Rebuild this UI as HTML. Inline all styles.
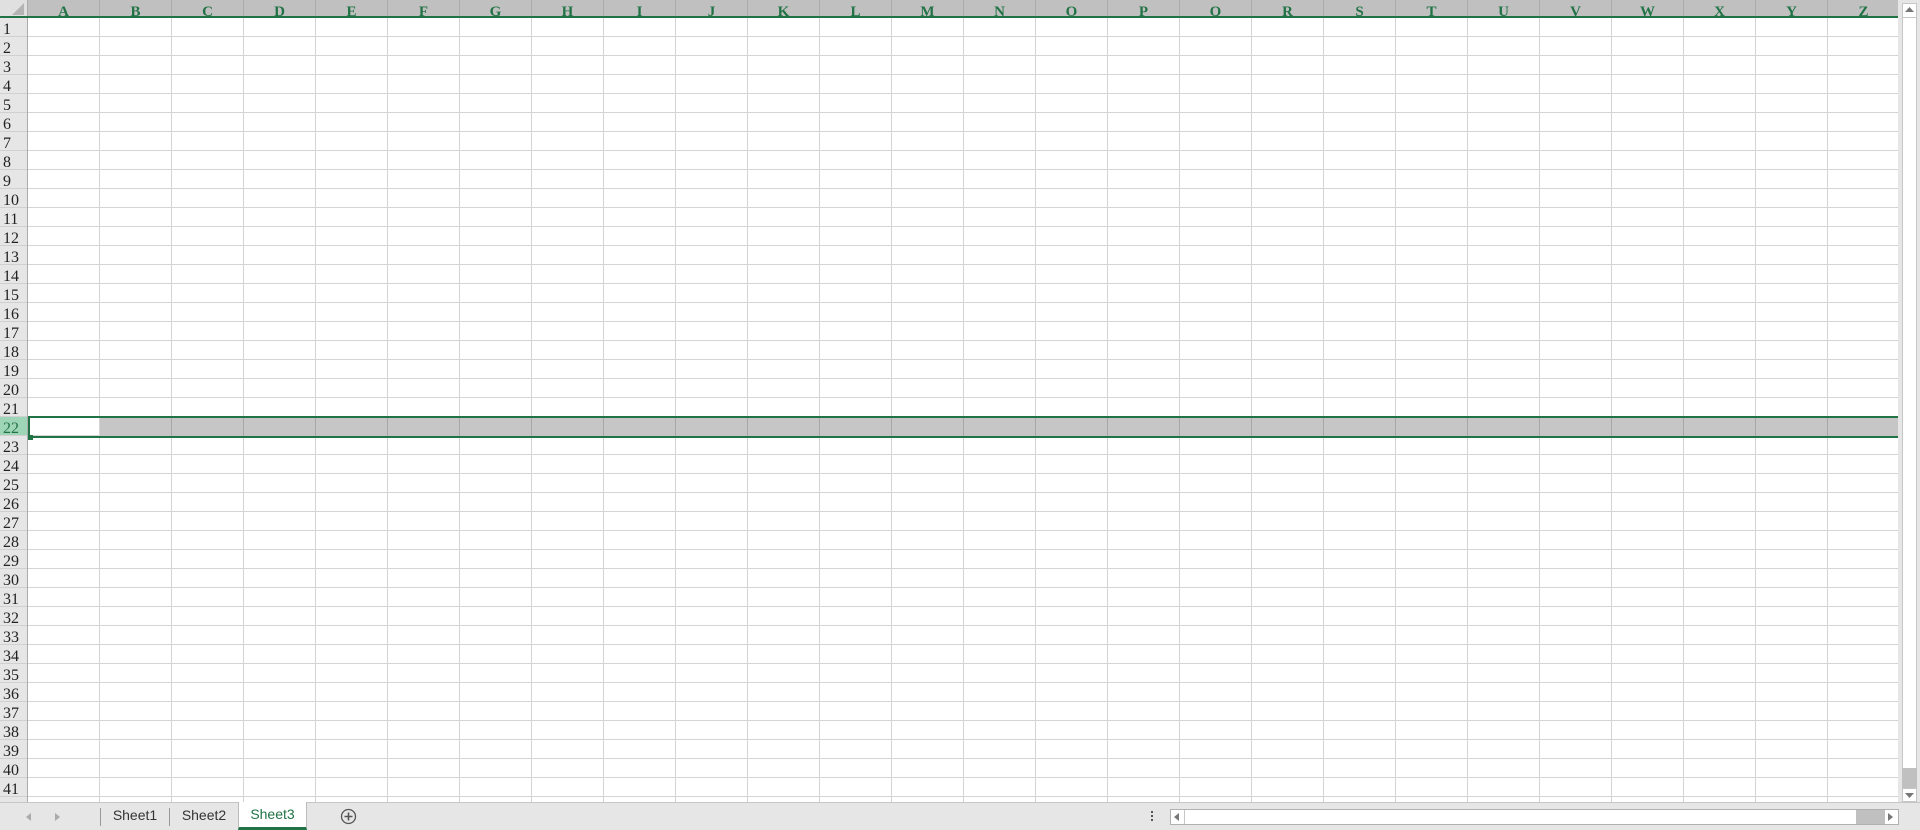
<!DOCTYPE html>
<html><head><meta charset="utf-8"><style>
*{margin:0;padding:0;box-sizing:border-box}
body{width:1920px;height:830px;overflow:hidden;background:#fff;position:relative;font-family:"Liberation Serif","Noto Serif CJK SC",serif}
.abs{position:absolute}
#grid{left:28px;top:18px;width:1870px;height:784px;
background-image:linear-gradient(to right,transparent 71px,#d4d4d4 71px),linear-gradient(to bottom,transparent 18px,#d4d4d4 18px);
background-size:72px 100%,100% 19px;background-position:0 0,0 0}
#colhdr{left:0;top:0;width:1898px;height:18px;background:#c0c0c0;border-bottom:2px solid #217346}
.ch{position:absolute;top:0;width:72px;height:16px;text-align:center;color:#217346;font-size:15px;line-height:24px;font-weight:bold;border-right:1px solid #ababab;overflow:hidden}
#rowhdr{left:0;top:18px;width:28px;height:784px;background:#e6e6e6;border-right:1px solid #ababab;overflow:hidden}
.rh{position:absolute;left:0;width:27px;height:19px;font-size:16px;line-height:24px;padding-left:3px;color:#222;border-bottom:1px solid #d0d0d0;overflow:hidden}
#tabbar{left:0;top:802px;width:1920px;height:28px;background:#e6e6e6;border-top:1px solid #c6c6c6;font-family:"Liberation Sans",sans-serif}
</style></head><body>
<div id="grid" class="abs"></div>
<div class="abs" style="left:100px;top:418px;width:1798px;height:18px;background:#c6c6c6;background-image:linear-gradient(to right,transparent 71px,#a8a8a8 71px);background-size:72px 100%"></div>
<div class="abs" style="left:28px;top:416px;width:1870px;height:2px;background:#217346"></div>
<div class="abs" style="left:28px;top:436px;width:1870px;height:2px;background:#217346"></div>
<div class="abs" style="left:28px;top:416px;width:2px;height:22px;background:#217346"></div>
<div class="abs" style="left:28px;top:435px;width:5px;height:5px;background:#217346"></div>

<div id="colhdr" class="abs">
<div class="abs" style="left:0;top:0;width:28px;height:16px;background:#e0e0e0;border-right:1px solid #ababab"></div>
<svg class="abs" style="left:12px;top:3px" width="12" height="12"><polygon points="12,0 12,12 0,12" fill="#b4b4b4"/></svg>
<div id="cols"></div>
</div>
<div id="rowhdr" class="abs"></div>

<div class="abs" style="left:1898px;top:0;width:22px;height:802px;background:#e6e6e6"></div>
<div class="abs" style="left:1902px;top:3px;width:15px;height:796px;background:#fff;border:1px solid #c6c6c6"></div>
<div class="abs" style="left:1902px;top:3px;width:15px;height:15px;border:1px solid #c6c6c6;background:#fff"></div>
<svg class="abs" style="left:1905px;top:7px" width="9" height="6"><polygon points="4.5,0 9,5 0,5" fill="#777"/></svg>
<div class="abs" style="left:1902px;top:768px;width:15px;height:20px;background:#c0c0c0"></div>
<div class="abs" style="left:1902px;top:788px;width:15px;height:14px;border:1px solid #c6c6c6;background:#fff"></div>
<svg class="abs" style="left:1905px;top:793px" width="9" height="6"><polygon points="0,0 9,0 4.5,5" fill="#777"/></svg>

<div id="tabbar" class="abs">
<svg class="abs" style="left:26px;top:10px" width="6" height="8"><polygon points="5,0 5,8 0,4" fill="#aaa"/></svg>
<svg class="abs" style="left:55px;top:10px" width="6" height="8"><polygon points="0,0 0,8 5,4" fill="#aaa"/></svg>
<div class="abs" style="left:100px;top:5px;width:1px;height:18px;background:#999"></div>
<div class="abs" style="left:100px;top:0;width:70px;height:27px;text-align:center;line-height:24px;font-size:14px;color:#333">Sheet1</div>
<div class="abs" style="left:169px;top:5px;width:1px;height:18px;background:#999"></div>
<div class="abs" style="left:170px;top:0;width:68px;height:27px;text-align:center;line-height:24px;font-size:14px;color:#333">Sheet2</div>
<div class="abs" style="left:238px;top:-1px;width:69px;height:28px;background:#fff;border-bottom:3px solid #217346;border-left:1px solid #bbb;border-right:1px solid #bbb;text-align:center;line-height:25px;font-size:14px;color:#217346">Sheet3</div>
<svg class="abs" style="left:340px;top:5px" width="17" height="17"><circle cx="8.5" cy="8.5" r="7" fill="none" stroke="#555" stroke-width="1.3"/><path d="M8.5 4.5v8M4.5 8.5h8" stroke="#555" stroke-width="1.6"/></svg>
<div class="abs" style="left:1151px;top:8px;width:2px;height:2px;background:#555;box-shadow:0 4px 0 #555,0 8px 0 #555"></div>
<div class="abs" style="left:1170px;top:6px;width:729px;height:16px;background:#fff;border:1px solid #b0b0b0"></div>
<div class="abs" style="left:1171px;top:7px;width:14px;height:14px;border-right:1px solid #c6c6c6"></div>
<svg class="abs" style="left:1174px;top:10px" width="6" height="9"><polygon points="5,0 5,8 0,4" fill="#777"/></svg>
<div class="abs" style="left:1856px;top:7px;width:29px;height:14px;background:#c0c0c0"></div>
<svg class="abs" style="left:1888px;top:10px" width="6" height="9"><polygon points="0,0 0,8 5,4" fill="#777"/></svg>
</div>
<script>
var c=document.getElementById('cols'),s='';
for(var i=0;i<26;i++){s+='<div class="ch" style="left:'+(28+i*72)+'px">'+String.fromCharCode(65+i)+'</div>';}
c.innerHTML=s;
var r=document.getElementById('rowhdr');s='';
for(var j=1;j<=42;j++){var sel=j==22;s+='<div class="rh" style="top:'+((j-1)*19)+'px;'+(sel?'background:#9fd5b7;color:#217346;':'')+'">'+j+'</div>';}
r.innerHTML=s;
</script>
</body></html>
